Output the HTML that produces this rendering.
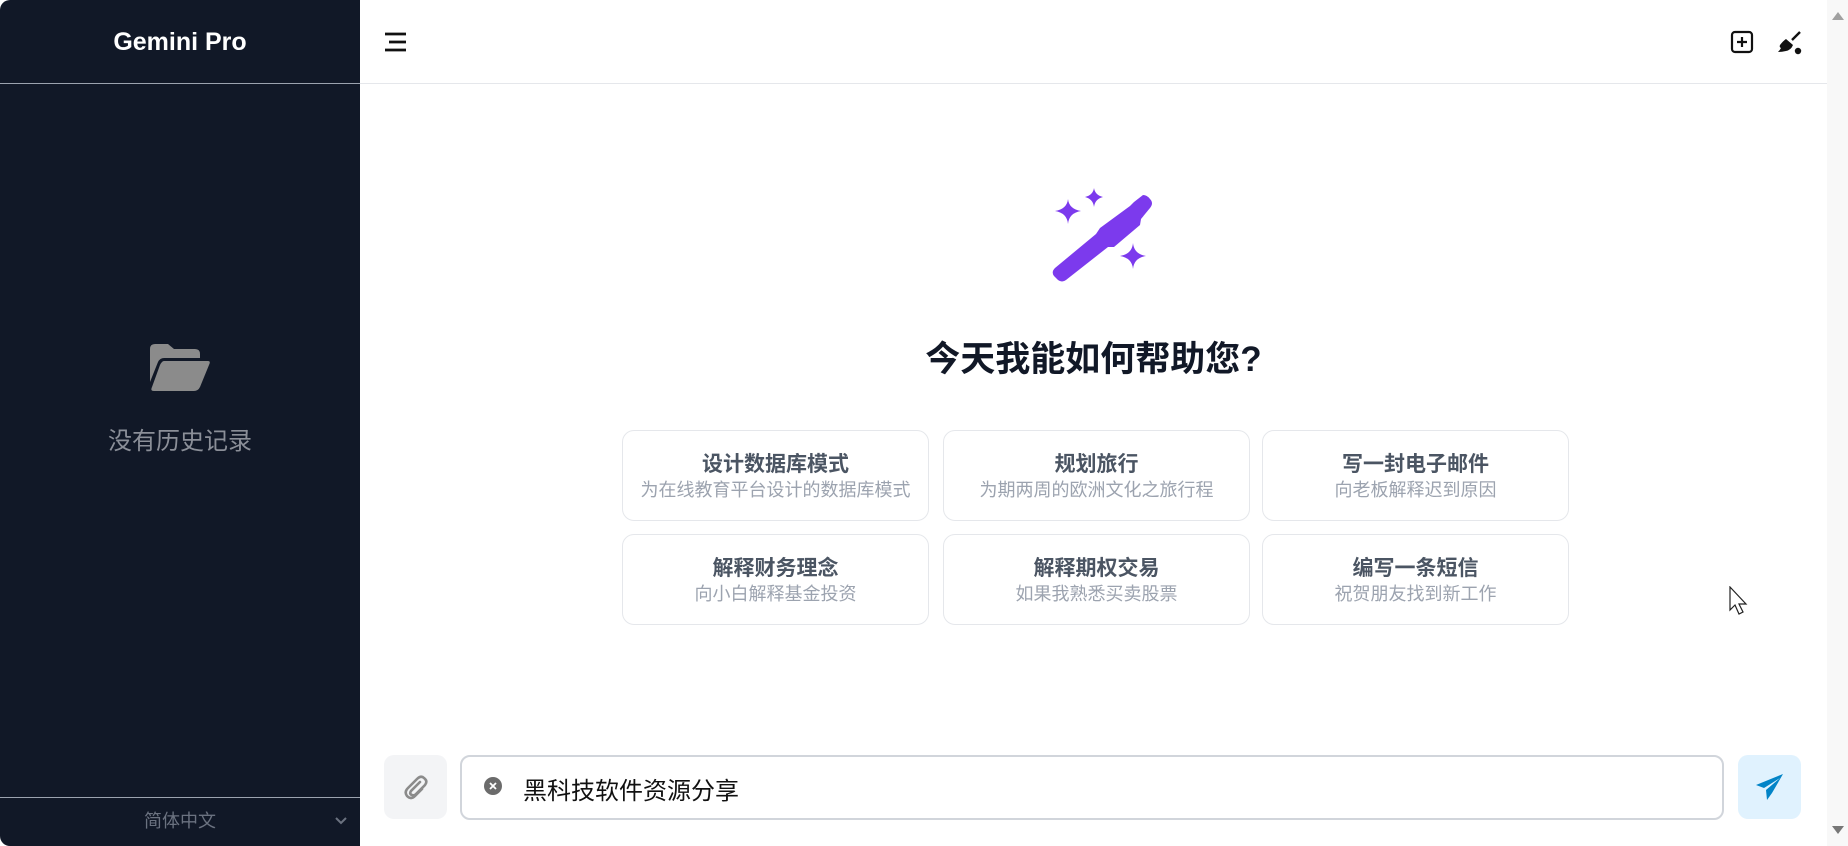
<!DOCTYPE html>
<html><head><meta charset="utf-8"><style>
*{box-sizing:border-box;margin:0;padding:0}
body{width:1848px;height:846px;overflow:hidden;background:#fff;font-family:"Liberation Sans","Noto Sans CJK SC",sans-serif;position:relative}
.side{position:absolute;left:0;top:0;width:360px;height:846px;background:#111827;border-top-left-radius:10px;border-bottom-left-radius:10px}
.side .t{position:absolute;top:0;left:0;width:360px;height:84px;border-bottom:1px solid #9ca3af;color:#fff;font-weight:bold;font-size:25px;text-align:center;line-height:84px}
.empty{position:absolute;top:421px;width:360px;text-align:center;color:#8b8f98;font-size:24px}
.lang{position:absolute;top:797px;left:0;width:360px;height:49px;border-top:1px solid #9ca3af;color:#6b7280;font-size:18px;text-align:center;line-height:46px}
.hdr{position:absolute;left:360px;top:0;width:1467px;height:84px;border-bottom:1px solid #e5e7eb}
.sb{position:absolute;right:0;top:0;width:21px;height:846px;background:#f8f8f8}
h1{position:absolute;left:360px;width:1467px;top:331px;text-align:center;font-size:35px;font-weight:bold;color:#111827}
.card{position:absolute;width:307px;height:91px;border:1px solid #e5e7eb;border-radius:12px;text-align:center}
.card b{display:block;margin-top:21px;font-size:21px;color:#4b5563;line-height:26px}
.card span{display:block;font-size:18px;color:#9ca3af;line-height:25px}
.att{position:absolute;left:384px;top:755px;width:63px;height:64px;background:#f3f4f6;border-radius:10px}
.inp{position:absolute;left:460px;top:755px;width:1264px;height:65px;border:2px solid #d1d5db;border-radius:10px}
.inp span{position:absolute;left:61px;top:14px;font-size:24px;color:#111}
.send{position:absolute;left:1738px;top:755px;width:63px;height:64px;background:#e0f2fe;border-radius:10px}
</style></head><body>
<div class="side">
<div class="t">Gemini Pro</div>
<svg style="position:absolute;left:150px;top:344px" width="60" height="47" viewBox="0 0 60 47"><path d="M0 5Q0 0 5 0H18L24 5H45Q50 5 50 10V14H14Q10 14 8 18L0 38Z" fill="#8b8b8b"/><path d="M14 17H58Q61 17 59 21L50 43Q48 47 44 47H4Q0 47 2 43L10 21Q12 17 14 17Z" fill="#8b8b8b"/></svg>
<div class="empty">没有历史记录</div>
<div class="lang">简体中文<svg style="position:absolute;right:12px;top:18px" width="14" height="10" viewBox="0 0 14 10"><path d="M2 2L7 7L12 2" stroke="#6b7280" stroke-width="2" fill="none"/></svg></div>
</div>
<div class="hdr"></div>
<svg style="position:absolute;left:384px;top:32px" width="24" height="20" viewBox="0 0 24 20"><path d="M1 2H22M5 10H22M1 18H22" stroke="#111" stroke-width="2.8"/></svg>
<svg style="position:absolute;left:1730px;top:30px" width="24" height="24" viewBox="0 0 24 24"><rect x="2" y="2" width="20" height="20" rx="3" stroke="#111" stroke-width="2.2" fill="none"/><path d="M12 7V17M7 12H17" stroke="#111" stroke-width="2.2"/></svg>
<svg style="position:absolute;left:1776px;top:29px" width="26" height="26" viewBox="0 0 26 26"><path d="M24 3L16 11" stroke="#111" stroke-width="2.4"/><path d="M10 10L17 16Q15 21 10 22Q6 23 2 23Q4 21 5 19Q3 18 4 16Q7 12 10 10Z" fill="#111"/><circle cx="22" cy="22" r="3.2" fill="#111"/></svg>
<div class="sb"><div style="position:absolute;left:5px;top:12px;border:6px solid transparent;border-bottom:8px solid #a0a0a0;border-top:0"></div><div style="position:absolute;left:5px;top:826px;border:6px solid transparent;border-top:8px solid #777;border-bottom:0"></div></div>
<svg style="position:absolute;left:1050px;top:187px" width="105" height="98" viewBox="0 0 105 98"><path d="M100 12Q104 16 100 21L91 32L90 38L64 60L58 60L16 93Q12 96 8 93L4 89Q1 85 5 81L46 47L50 41L80 19L84 15L93 8Q97 8 100 12Z" fill="#7c3aed"/><path d="M18 12Q19 22 31 24Q19 26 18 37Q17 26 5 24Q17 22 18 12Z" fill="#7c3aed"/><path d="M44 1Q45 8 53 10Q45 12 44 20Q43 12 35 10Q43 8 44 1Z" fill="#7c3aed"/><path d="M83 56Q84 67 96 69Q84 71 83 82Q82 71 70 69Q82 67 83 56Z" fill="#7c3aed"/></svg>
<h1>今天我能如何帮助您?</h1>
<div class="card" style="left:622px;top:430px"><b>设计数据库模式</b><span>为在线教育平台设计的数据库模式</span></div>
<div class="card" style="left:943px;top:430px"><b>规划旅行</b><span>为期两周的欧洲文化之旅行程</span></div>
<div class="card" style="left:1262px;top:430px"><b>写一封电子邮件</b><span>向老板解释迟到原因</span></div>
<div class="card" style="left:622px;top:534px"><b>解释财务理念</b><span>向小白解释基金投资</span></div>
<div class="card" style="left:943px;top:534px"><b>解释期权交易</b><span>如果我熟悉买卖股票</span></div>
<div class="card" style="left:1262px;top:534px"><b>编写一条短信</b><span>祝贺朋友找到新工作</span></div>
<svg style="position:absolute;left:1729px;top:586px" width="20" height="30" viewBox="0 0 20 30"><path d="M1 1V24L6 19L10 28L14 26L10 18H17Z" fill="#fff" stroke="#222" stroke-width="1.2"/></svg>
<div class="att"><svg style="position:absolute;left:19px;top:19px" width="26" height="26" viewBox="0 0 26 26"><path d="M17 8L8 17Q6 20 9 21Q11 22 13 20L22 11Q25 7 21 4Q18 1 14 5L5 14Q1 18 4 22Q8 26 12 22L19 15" stroke="#8b8b8b" stroke-width="2.6" fill="none" stroke-linecap="round"/></svg></div>
<div class="inp"><svg style="position:absolute;left:22px;top:20px" width="18" height="18" viewBox="0 0 18 18"><circle cx="9" cy="9" r="9" fill="#6b6b6b"/><path d="M6 6L12 12M12 6L6 12" stroke="#fff" stroke-width="1.8"/></svg><span>黑科技软件资源分享</span></div>
<div class="send"><svg style="position:absolute;left:17px;top:18px" width="30" height="28" viewBox="0 0 30 28"><path d="M28 1L1 12L9 15L25 5L11 17L12 27L17 20Q24 8 28 1Z" fill="#0284c7"/></svg></div>
</body></html>
